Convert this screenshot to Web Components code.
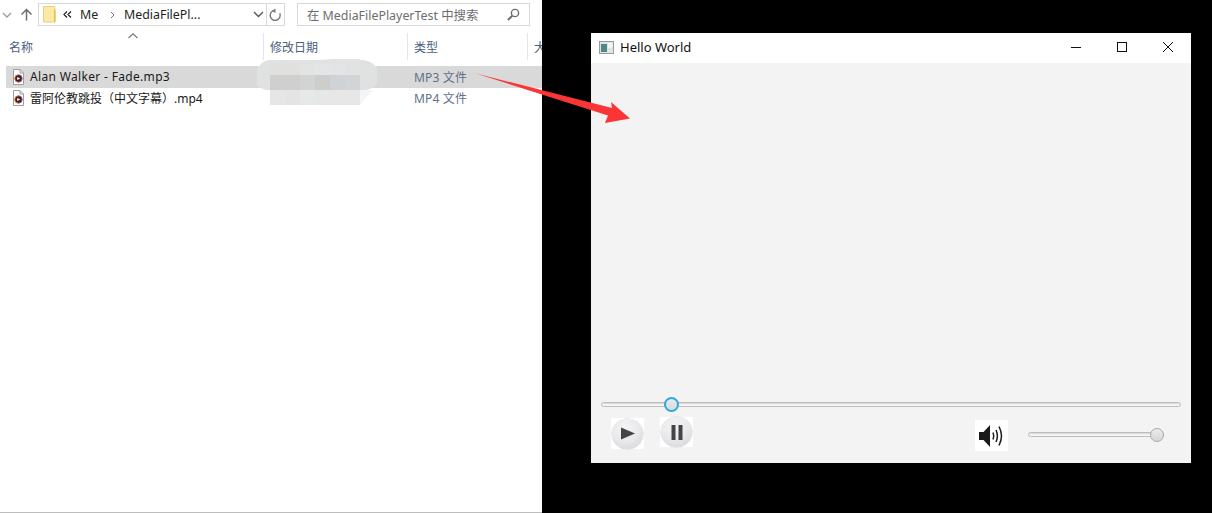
<!DOCTYPE html>
<html><head><meta charset="utf-8">
<style>
html,body{margin:0;padding:0;background:#000;overflow:hidden}
body{width:1212px;height:513px;position:relative;display:flex;font-family:"Noto Sans","Noto Sans CJK SC",sans-serif;font-size:12px}
</style></head><body>
<explorer-pane></explorer-pane>
<app-window></app-window>
<svg style="position:absolute;left:470px;top:68px" width="170" height="60" viewBox="470 68 170 60">
<polygon points="476,73.5 612,108 611,102 630,118.5 605,123 608,115.5" fill="#fb3535"/>
</svg>
<script>
function def(name,html){customElements.define(name,class extends HTMLElement{constructor(){super();this.attachShadow({mode:'open'}).innerHTML=html}})}

const fileIcon=`<svg width="14" height="16" viewBox="0 0 14 16"><path d="M2.5 .5H9L12.5 4V15.5H2.5Z" fill="#fff" stroke="#a0a0a0"/><path d="M9 .5V4H12.5" fill="none" stroke="#a0a0a0"/><circle cx="7.5" cy="9.5" r="3.7" fill="#3a2420"/><path d="M7.5 5.8A3.7 3.7 0 0 0 7.5 13.2" fill="none" stroke="#d8641e" stroke-width="1"/><path d="M7.5 5.8A3.7 3.7 0 0 1 7.5 13.2" fill="none" stroke="#a84aa8" stroke-width="1"/><path d="M6.2 7.9 9.4 9.5 6.2 11.1Z" fill="#fff"/></svg>`;

def('file-row',`<style>
:host{display:flex;align-items:center;box-sizing:border-box;height:21px;padding-bottom:2px;margin-left:6px;color:#1a1a1a}
:host([selected]){background:#d9d9d9;height:22px;padding-bottom:1px}
.i{width:24px;display:flex;justify-content:flex-start;padding-left:5px;box-sizing:border-box}
.n{width:384px;white-space:nowrap}
.t{color:#5f7188;white-space:nowrap;letter-spacing:.15px}
</style><span class="i">${fileIcon}</span><span class="n"><slot name="n"></slot></span><span class="t"><slot name="t"></slot></span>`);

def('col-head',`<style>
:host{display:flex;align-items:center;box-sizing:border-box;height:27px;padding-left:6px;border-right:1px solid #e3e6ea;color:#4c607a;white-space:nowrap;overflow:hidden}
</style><slot></slot>`);

const cols=['#e0e0df','#e0e0df','#e2e3e2','#e2e6e6','#e3e4e5','#e2e2e3','#cfcfcf','#cfcfcf','#d2d3d3','#cdcecc','#d0d3d6','#d3d4d6','#e6e6e4','#e3e4e3','#e6e9e9','#e6e8e8','#e8e7e5','#e6e7e6'];
def('blur-patch',`<style>
:host{position:absolute;left:257px;top:59px;width:120px;height:46px;display:block}
.a{position:absolute;left:0;top:1px;width:120px;height:30px;background:#e0e1e1;border-radius:14px 16px 12px 12px/14px 12px 10px 8px;box-shadow:0 0 1px #eee}
.b{position:absolute;left:103px;top:31px;width:13px;height:15px;background:#f3f5f8;clip-path:polygon(0 0,100% 0,0 100%)}
.m{position:absolute;left:13px;top:5px;display:grid;grid-template-columns:repeat(6,15px);grid-template-rows:11px 15px 15px}
.h{position:absolute;left:13px;top:0;width:90px;height:5px;background:#e1e2e2;clip-path:polygon(0 100%,35% 40%,70% 0,100% 0,100% 100%)}
${cols.map((c,i)=>`.m i:nth-child(${i+1}){background:${c}}`).join('')}
</style><div class="a"></div><div class="h"></div><div class="b"></div><div class="m">${cols.map(()=>'<i></i>').join('')}</div>`);

def('explorer-pane',`<style>
:host{display:block;position:relative;width:542px;height:513px;background:#fff;box-sizing:border-box;border-bottom:1px solid #bdbdbd;flex:none;overflow:hidden}
.bar{display:flex;align-items:center;height:23px;margin-top:3px;padding-left:2px}
.nav{display:flex;align-items:center;width:36px;flex:none;gap:8px}
.addr{display:flex;align-items:center;box-sizing:border-box;width:247px;height:23px;border:1px solid #d9d9d9;color:#1f1f1f;font-size:12.4px;white-space:nowrap}
.addr .seg{display:flex;align-items:center}
.folder{margin:0 6px 0 4px}
.addr .drop{margin-left:auto;display:flex;align-items:center;gap:2px;height:100%}
.refresh{width:17px;height:100%;border-left:1px solid #d9d9d9;display:flex;align-items:center;justify-content:center}
.search{display:flex;align-items:center;box-sizing:border-box;width:233px;height:23px;margin-left:12px;border:1px solid #d9d9d9;padding:0 9px;color:#6d6d6d;font-size:12.4px;white-space:nowrap}
.search svg{margin-left:auto}
.sort{height:7px;padding-left:128px;margin-top:7px}
.sort svg{display:block}
.head{display:grid;grid-template-columns:264px 144px 120px 40px;height:27px;margin-top:-7px}
.head col-head:first-child{padding-left:9px}
.list{margin-top:6px}
</style>
<div class="bar">
 <div class="nav">
  <svg width="10" height="8" viewBox="0 0 10 8"><path d="M1 2 5 6 9 2" fill="none" stroke="#9b9b9b" stroke-width="1.3"/></svg>
  <svg width="13" height="13" viewBox="0 0 13 13"><path d="M6.5 12.5V1.5M1.5 6.5 6.5 1.5 11.5 6.5" fill="none" stroke="#6e6e6e" stroke-width="1.5"/></svg>
 </div>
 <div class="addr">
  <svg class="folder" width="13" height="17" viewBox="0 0 13 17"><path d="M.5 .5H11a1 1 0 0 1 1 1V16H.5Z" fill="#fbe9a5" stroke="#e8cf82"/><path d="M11 4H12.5V16H11Z" fill="#e9bf45"/></svg>
  <span class="seg" style="width:17px;margin-left:1px"><svg width="9" height="7" viewBox="0 0 9 7"><path d="M4 .5 1 3.5 4 6.5M8 .5 5 3.5 8 6.5" fill="none" stroke="#222" stroke-width="1.2"/></svg></span>
  <span class="seg" style="width:30px">Me</span>
  <span class="seg" style="width:14px"><svg width="5" height="8" viewBox="0 0 5 8"><path d="M1 1 4 4 1 7" fill="none" stroke="#777"/></svg></span>
  <span>MediaFilePl...</span>
  <span class="drop"><svg width="11" height="7" viewBox="0 0 11 7"><path d="M1 1 5.5 5.5 10 1" fill="none" stroke="#555" stroke-width="1.4"/></svg>
  <span class="refresh"><svg width="13" height="14" viewBox="0 0 13 14"><path d="M9.8 4A5 5 0 1 1 3.5 3.2" transform="rotate(20 6.5 7.5)" fill="none" stroke="#777" stroke-width="1.4"/><path d="M6.5 .5V5L3 2.8Z" fill="#777"/></svg></span></span>
 </div>
 <div class="search"><span>在 MediaFilePlayerTest 中搜索</span>
  <svg width="13" height="13" viewBox="0 0 13 13"><circle cx="8" cy="5" r="3.6" fill="none" stroke="#6d6d6d" stroke-width="1.4"/><path d="M5.2 7.8 1 12" stroke="#6d6d6d" stroke-width="2"/></svg></div>
</div>
<div class="sort"><svg width="10" height="6" viewBox="0 0 10 6"><path d="M.5 5 5 .8 9.5 5" fill="none" stroke="#777" stroke-width="1.1"/></svg></div>
<div class="head"><col-head>名称</col-head><col-head>修改日期</col-head><col-head>类型</col-head><col-head style="border:0">大小</col-head></div>
<div class="list">
 <file-row selected><span slot="n" style="letter-spacing:.33px">Alan Walker - Fade.mp3</span><span slot="t">MP3 文件</span></file-row>
 <file-row><span slot="n">雷阿伦教跳投（中文字幕）.mp4</span><span slot="t">MP4 文件</span></file-row>
</div>
<blur-patch></blur-patch>`);

def('media-slider',`<style>
:host{display:block;position:relative;height:5px;box-sizing:border-box;border:1px solid #bdbdbd;border-radius:3px;background:#f6f6f6;box-shadow:inset 0 1px 1px #d8d8d8}
.th{position:absolute;top:50%;left:var(--pos);width:14px;height:14px;box-sizing:border-box;margin:-7px 0 0 -7px;border-radius:50%;border:1px solid #a8a8a8;background:linear-gradient(#ececec,#d6d6d6)}
:host([focus]) .th{width:15px;height:15px;margin:-7.5px 0 0 -7.5px;border:2px solid #2fa8dc;background:linear-gradient(#e8eaec,#d8dbde)}
</style><span class="th"></span>`);

def('round-btn',`<style>
:host{display:flex;align-items:center;justify-content:center;background:#fff;flex:none}
.b{width:31px;height:30px;border-radius:50%;display:flex;align-items:center;justify-content:center;box-sizing:border-box;box-shadow:0 0 0 .5px #d4d4d4;background:radial-gradient(circle at 42% 28%,#f3f3f5 0,#e9e9ec 50%,#dcdce1 75%,#cfcfd5 88%,#f0f0f2 100%)}
</style><span class="b"><slot></slot></span>`);

def('app-window',`<style>
:host{display:flex;flex-direction:column;width:600px;height:430px;margin:33px 0 0 49px;background:#f3f3f3;flex:none}
.title{display:flex;align-items:center;box-sizing:border-box;height:30px;padding-bottom:2px;background:#fff;flex:none;color:#111;font-size:13px}
.ico{margin:0 6px 0 8px}
.wb{margin-left:auto;display:flex}
.wb span{width:46px;height:28px;display:flex;align-items:center;justify-content:center}
.video{flex:1}
.ctl{padding:0 10px 12px;flex:none}
.row{display:flex;margin-top:10px;height:34px}
.row .v{margin-left:282px;margin-top:3px;width:33px;height:31px;background:#fff;display:flex;align-items:center;justify-content:center;flex:none}
.vs{width:136px;margin:15px 0 0 20px;flex:none}
</style>
<div class="title">
 <svg class="ico" width="15" height="13" viewBox="0 0 15 13"><rect x=".5" y=".5" width="14" height="12" fill="#dfe5e5" stroke="#9a9a9a"/><rect x="2" y="3" width="6" height="8" fill="#4d8a84"/><rect x="9" y="2" width="4" height="5" fill="#f4f7f6"/></svg>
 <span>Hello World</span>
 <span class="wb">
  <span><svg width="10" height="10"><path d="M0 5.5H11" stroke="#111"/></svg></span>
  <span><svg width="10" height="10"><rect x=".5" y=".5" width="9" height="9" fill="none" stroke="#111"/></svg></span>
  <span><svg width="10" height="10"><path d="M0 0 10 10M10 0 0 10" stroke="#111"/></svg></span>
 </span>
</div>
<div class="video"></div>
<div class="ctl">
 <media-slider focus style="--pos:12%"></media-slider>
 <div class="row">
  <round-btn style="width:33px;height:31px;margin-left:10px;margin-top:1px"><svg width="16" height="13" viewBox="0 0 16 13"><path d="M1 .5 15 6.5 1 12.5Z" fill="#444"/></svg></round-btn>
  <round-btn style="width:33px;height:30px;margin-left:16px"><svg width="12" height="15" viewBox="0 0 12 15"><path d="M.5 0H4.5V15H.5ZM7.5 0H11.5V15H7.5Z" fill="#444"/></svg></round-btn>
  <span class="v"><svg width="26" height="24" viewBox="0 0 26 24"><path d="M0 8H4.5L11 1V23L4.5 16H0Z" fill="#1b1b1b"/><path d="M14 8.5Q15.5 12 14 15.5M17 6Q19.8 12 17 18M20 2.5Q25 12 20 21.5" fill="none" stroke="#1b1b1b" stroke-width="1.5"/></svg></span>
  <media-slider class="vs" style="--pos:95.5%"></media-slider>
 </div>
</div>`);
</script>
</body></html>
